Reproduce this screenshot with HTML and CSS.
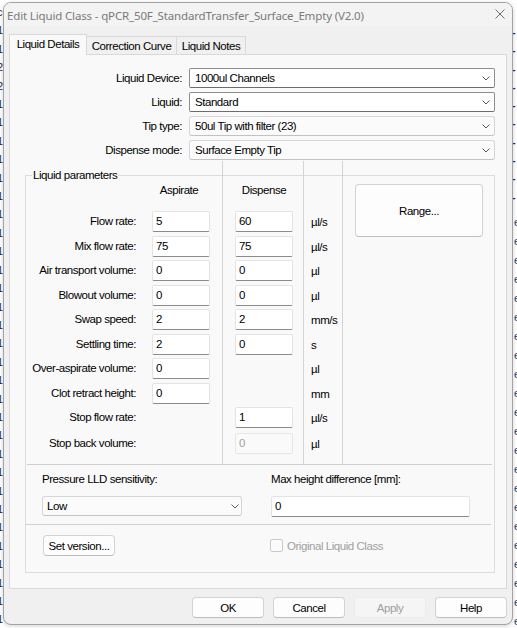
FILE: index.html
```html
<!DOCTYPE html>
<html lang="en">
<head>
<meta charset="utf-8">
<title>Edit Liquid Class</title>
<link rel="stylesheet" href="styles.css">
</head>
<body>
<div class="bg-left">c<br>1<br>1<br>2<br>2<br>1<br>1<br>1<br>1<br>1<br>1<br>1<br>1<br>1<br>1<br>1<br>1<br>1<br>1<br>1<br>1<br>1<br>1<br>1<br>1<br>1<br>1<br>1<br>1<br>1<br>1<br>1<br>1<br>1</div>
<div class="bg-right-top">-<br>-<br>-<br>-<br>-<br>-<br>-<br>-<br>-<br>-</div>
<div class="bg-right-bot">e<br>e<br>e<br>e<br>e<br>e<br>e<br>e<br>e<br>e<br>e<br>e<br>e<br>e<br>e<br>e<br>e<br>e<br>e<br>e<br>e<br>e</div>

<div class="window">
  <div class="titlebar">
    <span class="title">Edit Liquid Class - qPCR_50F_StandardTransfer_Surface_Empty (V2.0)</span>
    <svg class="close" width="10" height="10" viewBox="0 0 10 10"><path d="M0.5 0.5 L9.5 9.5 M9.5 0.5 L0.5 9.5" stroke="#6b6b6b" stroke-width="1" fill="none"/></svg>
  </div>
  <div class="body">
    <div class="tabs">
      <div class="tab active">Liquid Details</div>
      <div class="tab w-corr">Correction Curve</div>
      <div class="tab w-notes">Liquid Notes</div>
    </div>
    <div class="panel">
      <div class="combos">
        <span class="clabel">Liquid Device:</span>
        <div class="combo edit"><span>1000ul Channels</span><svg class="chev" width="8" height="5" viewBox="0 0 8 5"><path d="M0.5 0.5 L4 4 L7.5 0.5" stroke="#5f5f5f" fill="none"/></svg></div>
        <span class="clabel">Liquid:</span>
        <div class="combo edit"><span>Standard</span><svg class="chev" width="8" height="5" viewBox="0 0 8 5"><path d="M0.5 0.5 L4 4 L7.5 0.5" stroke="#5f5f5f" fill="none"/></svg></div>
        <span class="clabel">Tip type:</span>
        <div class="combo list"><span>50ul Tip with filter (23)</span><svg class="chev" width="8" height="5" viewBox="0 0 8 5"><path d="M0.5 0.5 L4 4 L7.5 0.5" stroke="#5f5f5f" fill="none"/></svg></div>
        <span class="clabel">Dispense mode:</span>
        <div class="combo list"><span>Surface Empty Tip</span><svg class="chev" width="8" height="5" viewBox="0 0 8 5"><path d="M0.5 0.5 L4 4 L7.5 0.5" stroke="#5f5f5f" fill="none"/></svg></div>
      </div>

      <div class="group">
        <div class="params">
          <div class="vline c5"></div>
          <div class="vline c9"></div>
          <div class="vline c11"></div>
          <div class="range">Range...</div>

          <div class="head h-asp">Aspirate</div>
          <div class="head h-disp">Dispense</div>

          <div class="lbl">Flow rate:</div><div class="field asp">5</div><div class="field disp">60</div><div class="unit">µl/s</div>
          <div class="lbl">Mix flow rate:</div><div class="field asp">75</div><div class="field disp">75</div><div class="unit">µl/s</div>
          <div class="lbl">Air transport volume:</div><div class="field asp">0</div><div class="field disp">0</div><div class="unit">µl</div>
          <div class="lbl">Blowout volume:</div><div class="field asp">0</div><div class="field disp">0</div><div class="unit">µl</div>
          <div class="lbl">Swap speed:</div><div class="field asp">2</div><div class="field disp">2</div><div class="unit">mm/s</div>
          <div class="lbl">Settling time:</div><div class="field asp">2</div><div class="field disp">0</div><div class="unit">s</div>
          <div class="lbl">Over-aspirate volume:</div><div class="field asp">0</div><div class="unit">µl</div>
          <div class="lbl">Clot retract height:</div><div class="field asp">0</div><div class="unit">mm</div>
          <div class="lbl">Stop flow rate:</div><div class="field disp">1</div><div class="unit">µl/s</div>
          <div class="lbl">Stop back volume:</div><div class="field disp disabled">0</div><div class="unit">µl</div>
        </div>
        <span class="legend">Liquid parameters</span>
        <div class="hline first"></div>
        <div class="lld">
          <div class="lld-col left">
            <span class="lld-label">Pressure LLD sensitivity:</span>
            <div class="combo list low"><span>Low</span><svg class="chev" width="8" height="5" viewBox="0 0 8 5"><path d="M0.5 0.5 L4 4 L7.5 0.5" stroke="#5f5f5f" fill="none"/></svg></div>
          </div>
          <div class="lld-col right">
            <span class="lld-label">Max height difference [mm]:</span>
            <div class="field wide">0</div>
          </div>
        </div>
        <div class="hline second"></div>
        <div class="version-row">
          <div class="btn set-version">Set version...</div>
          <span class="checkbox"></span>
          <span class="check-label">Original Liquid Class</span>
        </div>
      </div>
    </div>
    <div class="buttons">
      <div class="btn">OK</div>
      <div class="btn">Cancel</div>
      <div class="btn disabled">Apply</div>
      <div class="btn">Help</div>
    </div>
  </div>
</div>
</body>
</html>
```
FILE: styles.css
```css
* { box-sizing: border-box; }
html, body { margin: 0; padding: 0; }
body {
  width: 517px;
  height: 628px;
  position: relative;
  overflow: hidden;
  background: #ffffff;
  font-family: "Liberation Sans", Arial, sans-serif;
  font-size: 11.5px;
  letter-spacing: -0.45px;
  color: #000000;
}

/* desktop fragments behind the dialog */
.bg-left {
  position: absolute;
  left: -3px;
  top: 3px;
  width: 8px;
  font-size: 11px;
  line-height: 18.4px;
  letter-spacing: 0;
  color: #1d2747;
}
.bg-right-top {
  position: absolute;
  left: 512px;
  top: 23px;
  font-size: 11px;
  line-height: 18.3px;
  letter-spacing: 0;
  color: #1f3590;
  font-weight: bold;
}
.bg-right-bot {
  position: absolute;
  left: 514px;
  top: 213px;
  font-size: 11px;
  line-height: 19px;
  letter-spacing: 0;
  color: #23365f;
}

/* window */
.window {
  position: absolute;
  left: 3px;
  top: 2px;
  width: 510px;
  height: 623px;
  background: #f0f0f0;
  border: 1px solid #a3a3a3;
  border-radius: 8px;
  box-shadow: 0 1px 4px rgba(0, 0, 0, 0.18);
  display: flex;
  flex-direction: column;
  overflow: hidden;
}
.titlebar {
  flex: none;
  height: 24px;
  display: flex;
  align-items: center;
  justify-content: space-between;
  padding-left: 3px;
  background: #f3f3f3;
}
.title {
  font-family: "Noto Sans", "Open Sans", sans-serif;
  font-size: 11.5px;
  letter-spacing: -0.15px;
  color: #7a7a7a;
  white-space: nowrap;
}
.close {
  display: block;
  margin-right: 7px;
  margin-bottom: 2px;
}

.body {
  flex: 1;
  display: flex;
  flex-direction: column;
  padding: 7px 5px 6px;
}

/* tabs */
.tabs {
  display: flex;
  align-items: flex-end;
  height: 20px;
  position: relative;
  z-index: 1;
}
.tab {
  height: 18px;
  border-top: 1px solid #d9d9d9;
  border-right: 1px solid #d9d9d9;
  background: #f0f0f0;
  padding-top: 2px;
  line-height: 14px;
  text-align: center;
  white-space: nowrap;
}
.tab.active {
  width: 78px;
  height: 21px;
  margin-bottom: -1px;
  border-left: 1px solid #d9d9d9;
  background: #f9f9f9;
}
.tab.w-corr { width: 90px; }
.tab.w-notes { width: 69px; }

/* panel */
.panel {
  flex: none;
  height: 535px;
  background: #f9f9f9;
  border: 1px solid #d9d9d9;
  padding: 13px 11px 0 15px;
}

.combos {
  display: grid;
  grid-template-columns: 157px 306px;
  column-gap: 7px;
  row-gap: 4px;
  grid-auto-rows: 20px;
  align-items: center;
}
.clabel {
  text-align: right;
  line-height: 14px;
  white-space: nowrap;
}
.combo {
  height: 20px;
  display: flex;
  align-items: center;
  justify-content: space-between;
  padding: 0 4px 0 5px;
  line-height: 14px;
  white-space: nowrap;
}
.combo.edit {
  background: #ffffff;
  border: 1px solid #8e8e8e;
  border-bottom-color: #6c6c6c;
  border-radius: 2px;
}
.combo.list {
  background: #fbfbfb;
  border: 1px solid #d6d6d6;
  border-bottom-color: #c2c2c2;
  border-radius: 3px;
}
.chev { display: block; flex: none; }

/* group box */
.group {
  position: relative;
  margin-top: 15px;
  border: 1px solid #dcdcdc;
  padding-bottom: 16px;
}
.legend {
  position: absolute;
  top: -8px;
  left: 6px;
  padding: 0 1px;
  line-height: 14px;
  background: #f9f9f9;
  z-index: 1;
}

.params {
  display: grid;
  margin-top: -15px;
  grid-template-columns: 110px 16px 58px 12px 1px 12px 58px 10px 1px 38px 1px 1fr;
  grid-template-rows: 50px repeat(8, 24.5px) 26px 31px;
}
.vline {
  grid-row: 1 / -1;
  background: #d4d4d4;
}
.vline.c5 { grid-column: 5; }
.vline.c9 { grid-column: 9; }
.vline.c11 { grid-column: 11; }

.range {
  grid-column: 12;
  grid-row: 1 / 4;
  align-self: start;
  margin: 23px 0 0 12px;
  width: 128px;
  height: 53px;
  display: flex;
  align-items: center;
  justify-content: center;
  background: #fdfdfd;
  border: 1px solid #d3d3d3;
  border-bottom-color: #bfbfbf;
  border-radius: 4px;
}

.head {
  padding-top: 22px;
  line-height: 14px;
  text-align: center;
  white-space: nowrap;
}
.h-asp { grid-column: 2 / 5; }
.h-disp { grid-column: 7; }

.lbl {
  grid-column: 1;
  align-self: start;
  text-align: right;
  line-height: 21px;
  white-space: nowrap;
}
.unit {
  grid-column: 10;
  align-self: start;
  padding-left: 7px;
  line-height: 22px;
  white-space: nowrap;
}
.field {
  align-self: start;
  height: 21px;
  background: #ffffff;
  border: 1px solid #e3e3e3;
  border-bottom-color: #8b8b8b;
  border-radius: 2px;
  padding: 0 3px;
  line-height: 18px;
}
.field.asp { grid-column: 3; }
.field.disp { grid-column: 7; }
.field.disabled {
  background: #fafafa;
  border-color: #e6e6e6;
  color: #a3a3a3;
}

.hline {
  height: 1px;
  background: #d0d0d0;
}
.hline.first { margin: 0 2px 0 1px; }
.hline.second { margin: 7px 3px 0 0; }

.lld {
  display: flex;
  padding: 7px 0 0 16px;
}
.lld-col { display: flex; flex-direction: column; }
.lld-col.left { width: 200px; }
.lld-col.right { width: 199px; margin-left: 29px; }
.lld-label { line-height: 14px; white-space: nowrap; }
.combo.low { margin-top: 10px; padding-left: 4px; padding-right: 2px; }
.field.wide { margin-top: 10px; align-self: stretch; }

.version-row {
  display: flex;
  align-items: center;
  margin-top: 10px;
  padding-left: 17px;
}
.btn {
  height: 21px;
  display: flex;
  align-items: center;
  justify-content: center;
  background: #fdfdfd;
  border: 1px solid #d3d3d3;
  border-bottom-color: #bcbcbc;
  border-radius: 4px;
  white-space: nowrap;
}
.set-version { width: 72px; }
.checkbox {
  width: 13px;
  height: 13px;
  margin-left: 155px;
  border: 1px solid #c9c9c9;
  border-radius: 2px;
  background: #fbfbfb;
}
.check-label {
  margin-left: 4px;
  color: #a0a0a0;
  line-height: 14px;
}

/* dialog buttons */
.buttons {
  display: flex;
  justify-content: flex-end;
  gap: 9px;
  margin-top: 8px;
}
.buttons .btn { width: 72px; }
.buttons .btn.disabled {
  background: #f5f5f5;
  border-color: #ececec;
  color: #a0a0a0;
}
```
